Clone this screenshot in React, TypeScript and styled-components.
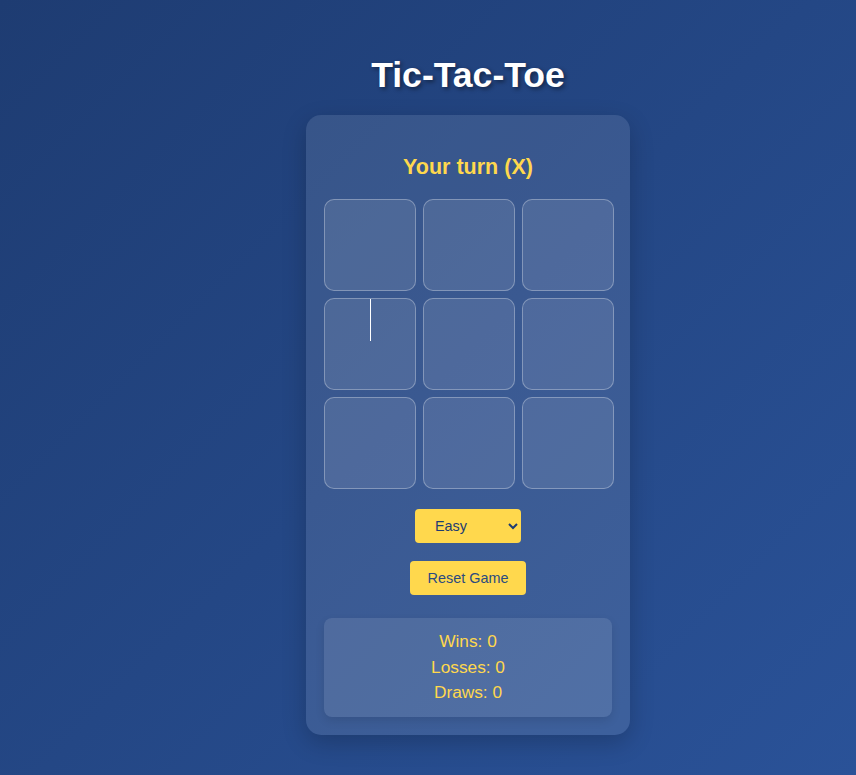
import React, { useState } from "react";
import styled, { createGlobalStyle } from "styled-components";

const GlobalStyle = createGlobalStyle`
  html, body {
    margin: 0;
    padding: 0;
  }
  body {
    min-height: 100vh;
    background: linear-gradient(135deg, #1e3c72 0%, #2a5298 100%);
    background-attachment: fixed;
    font-family: "Liberation Sans", Arial, sans-serif;
  }
`;

const Page = styled.div`
  box-sizing: border-box;
  width: 100%;
  min-height: 100vh;
  padding: 55px 0 40px 80px;
  display: flex;
  flex-direction: column;
  align-items: center;
`;

const Title = styled.h1`
  margin: 0 0 20px;
  font-size: 35.6px;
  line-height: 40px;
  font-weight: 700;
  color: #ffffff;
  text-shadow: 2px 2px 4px rgba(0, 0, 0, 0.45);
`;

const Card = styled.div`
  box-sizing: border-box;
  width: 324px;
  padding: 40px 18px 18px;
  border-radius: 15px;
  background: rgba(255, 255, 255, 0.1);
  box-shadow: 0 8px 24px rgba(0, 0, 0, 0.2);
  display: flex;
  flex-direction: column;
  align-items: center;
`;

const Status = styled.div`
  font-size: 21.5px;
  line-height: 25px;
  font-weight: 700;
  color: #ffd84d;
  margin-bottom: 19px;
`;

const Board = styled.div`
  align-self: flex-start;
  display: grid;
  grid-template-columns: repeat(3, 92px);
  grid-auto-rows: 92px;
  gap: 7px;
`;

const Cell = styled.button`
  position: relative;
  box-sizing: border-box;
  padding: 0;
  border: 1px solid rgba(255, 255, 255, 0.3);
  border-radius: 10px;
  background: rgba(255, 255, 255, 0.1);
  cursor: pointer;
`;

const Caret = styled.span`
  position: absolute;
  left: 45px;
  top: 0;
  width: 1px;
  height: 42px;
  background: #ffffff;
`;

const Select = styled.select`
  box-sizing: border-box;
  margin-top: 20px;
  width: 106px;
  height: 34px;
  padding: 0 6px 0 16px;
  border: none;
  border-radius: 4px;
  background: #ffd84d;
  color: #1e3c72;
  font-family: "Liberation Sans", Arial, sans-serif;
  font-size: 14.4px;
  outline: none;
`;

const ResetButton = styled.button`
  box-sizing: border-box;
  margin-top: 18px;
  height: 34px;
  padding: 0 18px;
  border: none;
  border-radius: 4px;
  background: #ffd84d;
  color: #2a4a80;
  font-family: "Liberation Sans", Arial, sans-serif;
  font-size: 14.4px;
  cursor: pointer;
`;

const Stats = styled.div`
  box-sizing: border-box;
  margin-top: 23px;
  width: 100%;
  padding: 11px 0 11px;
  border-radius: 8px;
  background: rgba(255, 255, 255, 0.1);
  box-shadow: 0 4px 10px rgba(0, 0, 0, 0.1);
  display: flex;
  flex-direction: column;
  align-items: center;
`;

const StatLine = styled.div`
  font-size: 17.3px;
  line-height: 25.5px;
  color: #ffd84d;
`;

export default function App() {
  const [level, setLevel] = useState("easy");
  const cells = Array.from({ length: 9 }, (_, i) => i);
  return (
    <>
      <GlobalStyle />
      <Page>
        <Title>Tic-Tac-Toe</Title>
        <Card>
          <Status>Your turn (X)</Status>
          <Board>
            {cells.map((i) => (
              <Cell key={i} aria-label={`cell ${i + 1}`}>
                {i === 3 && <Caret />}
              </Cell>
            ))}
          </Board>
          <Select value={level} onChange={(e) => setLevel(e.target.value)}>
            <option value="easy">Easy</option>
            <option value="medium">Medium</option>
            <option value="hard">Hard</option>
          </Select>
          <ResetButton>Reset Game</ResetButton>
          <Stats>
            <StatLine>Wins: 0</StatLine>
            <StatLine>Losses: 0</StatLine>
            <StatLine>Draws: 0</StatLine>
          </Stats>
        </Card>
      </Page>
    </>
  );
}
